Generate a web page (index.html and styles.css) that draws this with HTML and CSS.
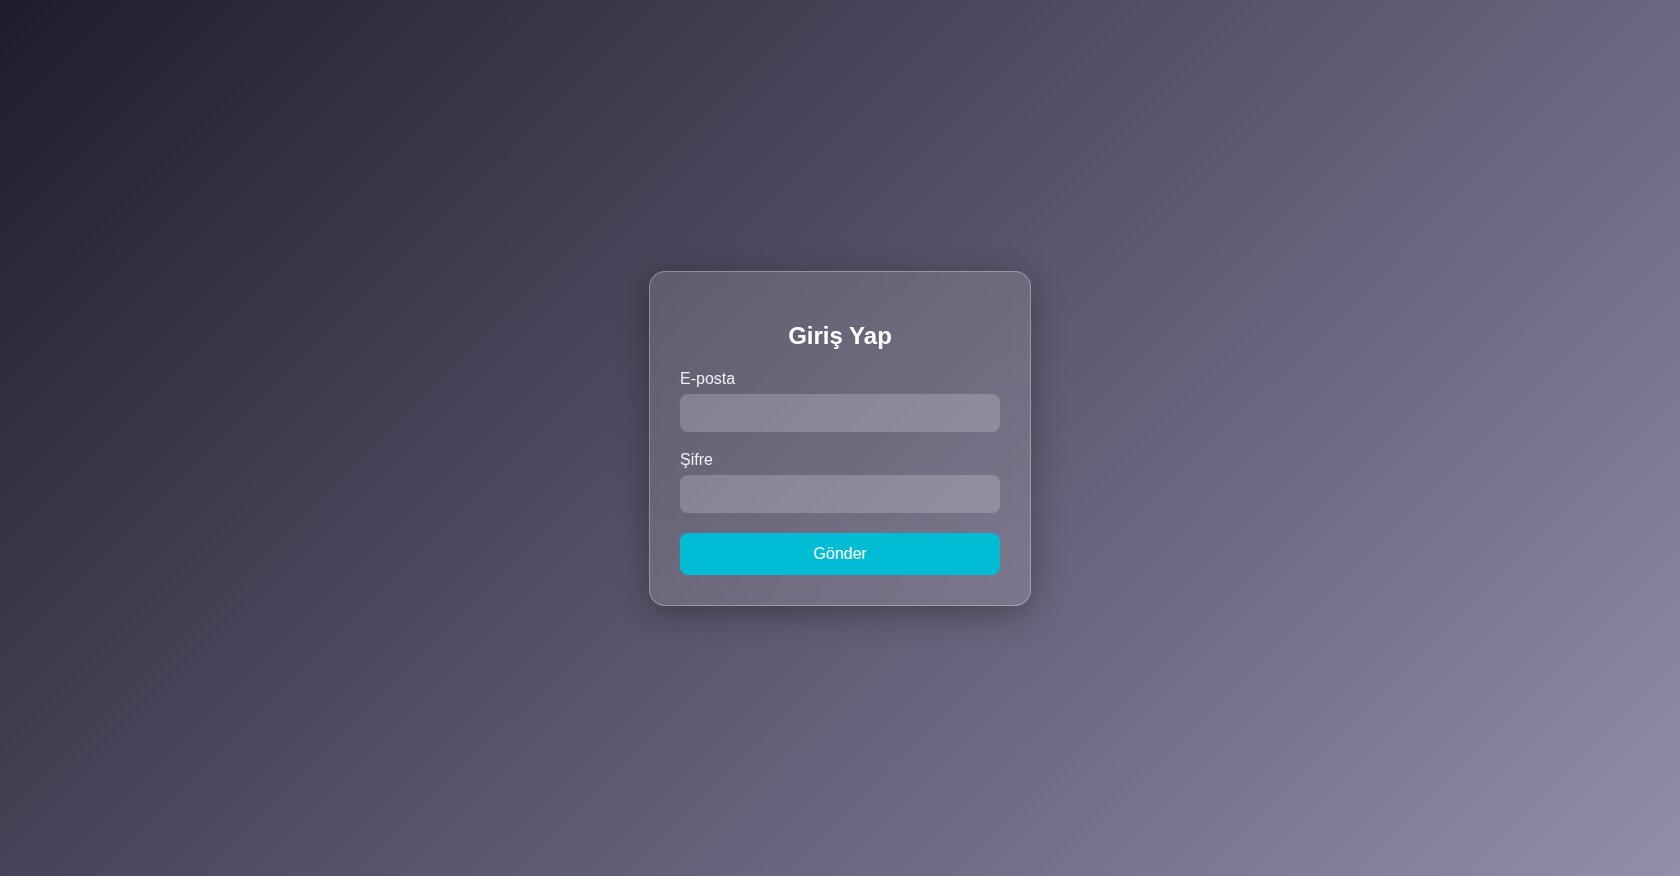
FILE: index.html
```html
<!DOCTYPE html>
<html lang="tr">
<head>
<meta charset="utf-8">
<title>Giriş Yap</title>
<link rel="stylesheet" href="styles.css">
</head>
<body>
  <div class="card">
    <h2 class="title">Giriş Yap</h2>
    <form class="form">
      <div class="group">
        <label class="label" for="email">E-posta</label>
        <input class="input" id="email" type="email">
      </div>
      <div class="group">
        <label class="label" for="pass">Şifre</label>
        <input class="input" id="pass" type="password">
      </div>
      <button class="btn" type="button">Gönder</button>
    </form>
  </div>
</body>
</html>
```
FILE: styles.css
```css
* { box-sizing: border-box; }
html, body { height: 100%; }
body {
  margin: 0;
  min-height: 100vh;
  display: flex;
  align-items: center;
  justify-content: center;
  font-family: "Liberation Sans", Arial, sans-serif;
  background: linear-gradient(135deg, #1f1c2c, #928dab);
}
.card {
  width: 382px;
  padding: 30px;
  border-radius: 16px;
  background: rgba(255, 255, 255, 0.13);
  border: 1px solid rgba(255, 255, 255, 0.3);
  box-shadow: 0 8px 32px rgba(0, 0, 0, 0.3);
  backdrop-filter: blur(10px);
}
.title {
  margin: 20px 0 20px;
  text-align: center;
  color: #fff;
  font-size: 24px;
  font-weight: bold;
}
.form { display: flex; flex-direction: column; }
.group { display: flex; flex-direction: column; margin-bottom: 19px; }
.label {
  color: rgba(255, 255, 255, 0.9);
  font-size: 16px;
  margin-bottom: 6px;
}
.input {
  height: 38px;
  padding: 10px;
  border: none;
  border-radius: 8px;
  background: rgba(255, 255, 255, 0.2);
  color: #fff;
  font: 16px "Liberation Sans", Arial, sans-serif;
  outline: none;
}
.btn {
  margin-top: 1px;
  height: 42px;
  border: none;
  border-radius: 8px;
  background: #00bcd4;
  color: #fff;
  font: 16px "Liberation Sans", Arial, sans-serif;
  cursor: pointer;
}
```
